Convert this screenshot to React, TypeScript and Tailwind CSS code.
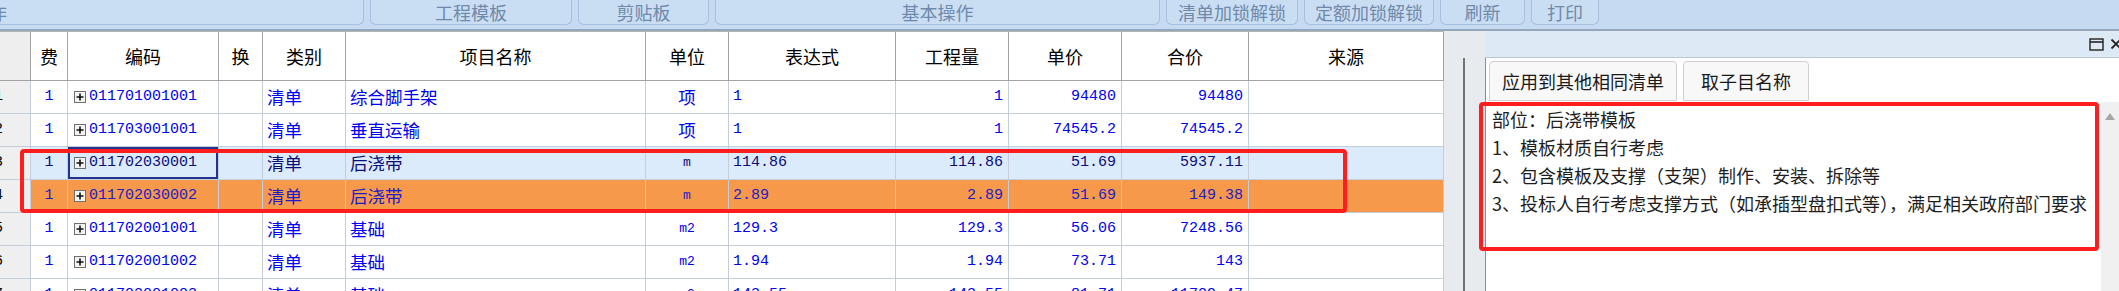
import React from 'react'

interface BillRow {
  n: number
  code: string
  name: string
  unit: string
  expr: string
  qty: string
  price: string
  total: string
  tone: 'plain' | 'sel' | 'hot'
}

const ROWS: BillRow[] = [
  { n: 1, code: '011701001001', name: '综合脚手架', unit: '项', expr: '1', qty: '1', price: '94480', total: '94480', tone: 'plain' },
  { n: 2, code: '011703001001', name: '垂直运输', unit: '项', expr: '1', qty: '1', price: '74545.2', total: '74545.2', tone: 'plain' },
  { n: 3, code: '011702030001', name: '后浇带', unit: 'm', expr: '114.86', qty: '114.86', price: '51.69', total: '5937.11', tone: 'sel' },
  { n: 4, code: '011702030002', name: '后浇带', unit: 'm', expr: '2.89', qty: '2.89', price: '51.69', total: '149.38', tone: 'hot' },
  { n: 5, code: '011702001001', name: '基础', unit: 'm2', expr: '129.3', qty: '129.3', price: '56.06', total: '7248.56', tone: 'plain' },
  { n: 6, code: '011702001002', name: '基础', unit: 'm2', expr: '1.94', qty: '1.94', price: '73.71', total: '143', tone: 'plain' },
  { n: 7, code: '011702001003', name: '基础', unit: 'm2', expr: '143.55', qty: '143.55', price: '81.71', total: '11729.47', tone: 'plain' },
]

const TOOLBAR = [
  { label: '操作', w: 'w-[364px]', first: true },
  { label: '工程模板', w: 'w-[202px]' },
  { label: '剪贴板', w: 'w-[131px]' },
  { label: '基本操作', w: 'w-[445px]' },
  { label: '清单加锁解锁', w: 'w-[132px]' },
  { label: '定额加锁解锁', w: 'w-[130px]' },
  { label: '刷新', w: 'w-[85px]' },
  { label: '打印', w: 'w-[68px]' },
]

const HEADERS = ['费', '编码', '换', '类别', '项目名称', '单位', '表达式', '工程量', '单价', '合价', '来源']

const CJK = "font-['Noto_Sans_CJK_SC',sans-serif]"
const MONO = "font-['Liberation_Mono','Noto_Sans_CJK_SC',monospace]"

const ROW_BG: Record<BillRow['tone'], string> = {
  plain: 'bg-white text-[#0000f0]',
  sel: 'bg-[#dcebfb] text-[#0b0b7a]',
  hot: 'bg-[#f7994b] text-[#1c1cc8]',
}

function PlusBox() {
  return (
    <svg width="12" height="12" viewBox="0 0 12 12" className="shrink-0">
      <rect x="0.5" y="0.5" width="11" height="11" fill="#f3f3f3" stroke="#6f6f6f" />
      <path d="M2.5 6h7M6 2.5v7" stroke="#111" strokeWidth="1.6" />
    </svg>
  )
}

function Toolbar() {
  return (
    <div className="h-[29px] bg-[#c6dbf1] flex gap-[6px] overflow-hidden shrink-0">
      {TOOLBAR.map((b) => (
        <div
          key={b.label}
          className={`${b.w} h-[25px] shrink-0 bg-[#cadef3] border-b border-r border-[#a8c0dc] rounded-br-[6px] flex items-center text-[18px] text-[#6f89aa] ${CJK} ${
            b.first ? 'justify-start' : 'border-l rounded-bl-[6px] justify-center'
          }`}
        >
          <span className={b.first ? 'ml-[-29px]' : ''}>{b.label}</span>
        </div>
      ))}
    </div>
  )
}

function Grid() {
  const cell = 'flex items-center border-r border-b border-[#c5cddb] overflow-hidden whitespace-nowrap'
  return (
    <div className="relative w-[1444px] shrink-0 border-t border-[#b4b4b4] overflow-hidden">
      <div className={`grid grid-cols-[31px_37px_151px_44px_83px_300px_83px_167px_113px_113px_127px_195px] h-[49px] bg-white text-[18px] text-black ${CJK}`}>
        <div className="bg-[#eeeeee] border-r border-b border-[#a3a3a3]" />
        {HEADERS.map((h) => (
          <div key={h} className="flex items-center justify-center border-r border-b border-[#a3a3a3]">
            {h}
          </div>
        ))}
      </div>
      {ROWS.map((r) => (
        <div
          key={r.n}
          className={`grid grid-cols-[31px_37px_151px_44px_83px_300px_83px_167px_113px_113px_127px_195px] h-[33px] ${ROW_BG[r.tone]}`}
        >
          <div className={`${cell} bg-[#efefef] border-[#b9b9b9] text-black text-[15px] ${MONO}`}>
            <span className="ml-[-6px]">{r.n}</span>
          </div>
          <div className={`${cell} justify-center text-[15px] ${MONO}`}>1</div>
          <div
            className={`${cell} text-[15px] ${MONO} ${
              r.tone === 'sel' ? 'shadow-[inset_0_0_0_2px_#26338c]' : ''
            }`}
          >
            <span className="ml-[6px] mr-[3px] flex">
              <PlusBox />
            </span>
            {r.code}
          </div>
          <div className={cell} />
          <div className={`${cell} pl-[4px] text-[17.5px] ${CJK}`}>清单</div>
          <div className={`${cell} pl-[4px] text-[17.5px] ${CJK}`}>{r.name}</div>
          <div
            className={`${cell} justify-center ${
              r.unit === '项' ? `text-[17.5px] ${CJK}` : `text-[13px] ${MONO}`
            }`}
          >
            {r.unit}
          </div>
          <div className={`${cell} pl-[4px] text-[15px] ${MONO}`}>{r.expr}</div>
          <div className={`${cell} justify-end pr-[5px] text-[15px] ${MONO}`}>{r.qty}</div>
          <div className={`${cell} justify-end pr-[5px] text-[15px] ${MONO}`}>{r.price}</div>
          <div className={`${cell} justify-end pr-[5px] text-[15px] ${MONO}`}>{r.total}</div>
          <div className={cell} />
        </div>
      ))}
      {/* red annotation round rows 3-4 */}
      <div className="absolute left-[20px] top-[117px] w-[1327px] h-[64px] border-4 border-[#ff1d1d] rounded-[4px]" />
    </div>
  )
}

function Splitter() {
  return (
    <div className="w-[41px] shrink-0 bg-[#e7ebf0] flex flex-col">
      <div className="h-[27px]" />
      <div className="flex-1 ml-[19px] w-[2px] bg-[#737373]" />
    </div>
  )
}

function RightPanel() {
  return (
    <div className={`flex-1 flex flex-col min-w-0 ${CJK}`}>
      <div className="h-[27px] shrink-0 bg-[#dde9f5] border-b border-[#bcc7d2] flex items-center justify-end overflow-hidden">
        <svg width="15" height="13" viewBox="0 0 15 13" className="mr-[6px] mt-[1px] shrink-0">
          <rect x="1" y="1" width="13" height="11" fill="none" stroke="#222" strokeWidth="1.4" />
          <path d="M1 4h13" stroke="#222" strokeWidth="1.6" />
        </svg>
        <svg width="12" height="12" viewBox="0 0 12 12" className="mr-[-3px] shrink-0">
          <path d="M1.5 1.5l9 9M10.5 1.5l-9 9" stroke="#222" strokeWidth="1.8" />
        </svg>
      </div>
      <div className="relative flex-1 flex flex-col bg-white border-l border-[#8d8d8d]">
        <div className="flex gap-[6px] pt-[3px] pl-[3px] h-[44px] shrink-0">
          <div className="w-[188px] h-[40px] bg-[#f8f8f8] border border-[#cfcfcf] rounded-t-[4px] flex items-center justify-center text-[18px] text-[#1a1a1a]">
            应用到其他相同清单
          </div>
          <div className="w-[126px] h-[40px] bg-[#f8f8f8] border border-[#cfcfcf] rounded-t-[4px] flex items-center justify-center text-[18px] text-[#1a1a1a]">
            取子目名称
          </div>
        </div>
        <div className="flex flex-1 min-h-0">
          <div className="flex-1 pl-[6px] pt-[3px] text-[18px] leading-[28px] text-[#1e1e1e] whitespace-nowrap overflow-hidden">
            <div>部位：后浇带模板</div>
            <div>1、模板材质自行考虑</div>
            <div>2、包含模板及支撑（支架）制作、安装、拆除等</div>
            <div>3、投标人自行考虑支撑方式（如承插型盘扣式等），满足相关政府部门要求</div>
          </div>
          <div className="w-[18px] shrink-0 bg-[#f0f0f0] flex justify-center pt-[11px]">
            <svg width="10" height="7" viewBox="0 0 10 7">
              <path d="M5 0L10 7H0z" fill="#a6a6a6" />
            </svg>
          </div>
        </div>
        {/* red annotation round the description */}
        <div className="absolute left-[-7px] top-[44px] w-[620px] h-[149px] border-4 border-[#ff1d1d] rounded-[4px]" />
      </div>
    </div>
  )
}

export default function App() {
  return (
    <div className="w-[2119px] h-[291px] overflow-hidden bg-white flex flex-col">
      <Toolbar />
      <div className="h-[2px] shrink-0 bg-[#93a7bd]" />
      <div className="flex flex-1 min-h-0">
        <Grid />
        <Splitter />
        <RightPanel />
      </div>
    </div>
  )
}
